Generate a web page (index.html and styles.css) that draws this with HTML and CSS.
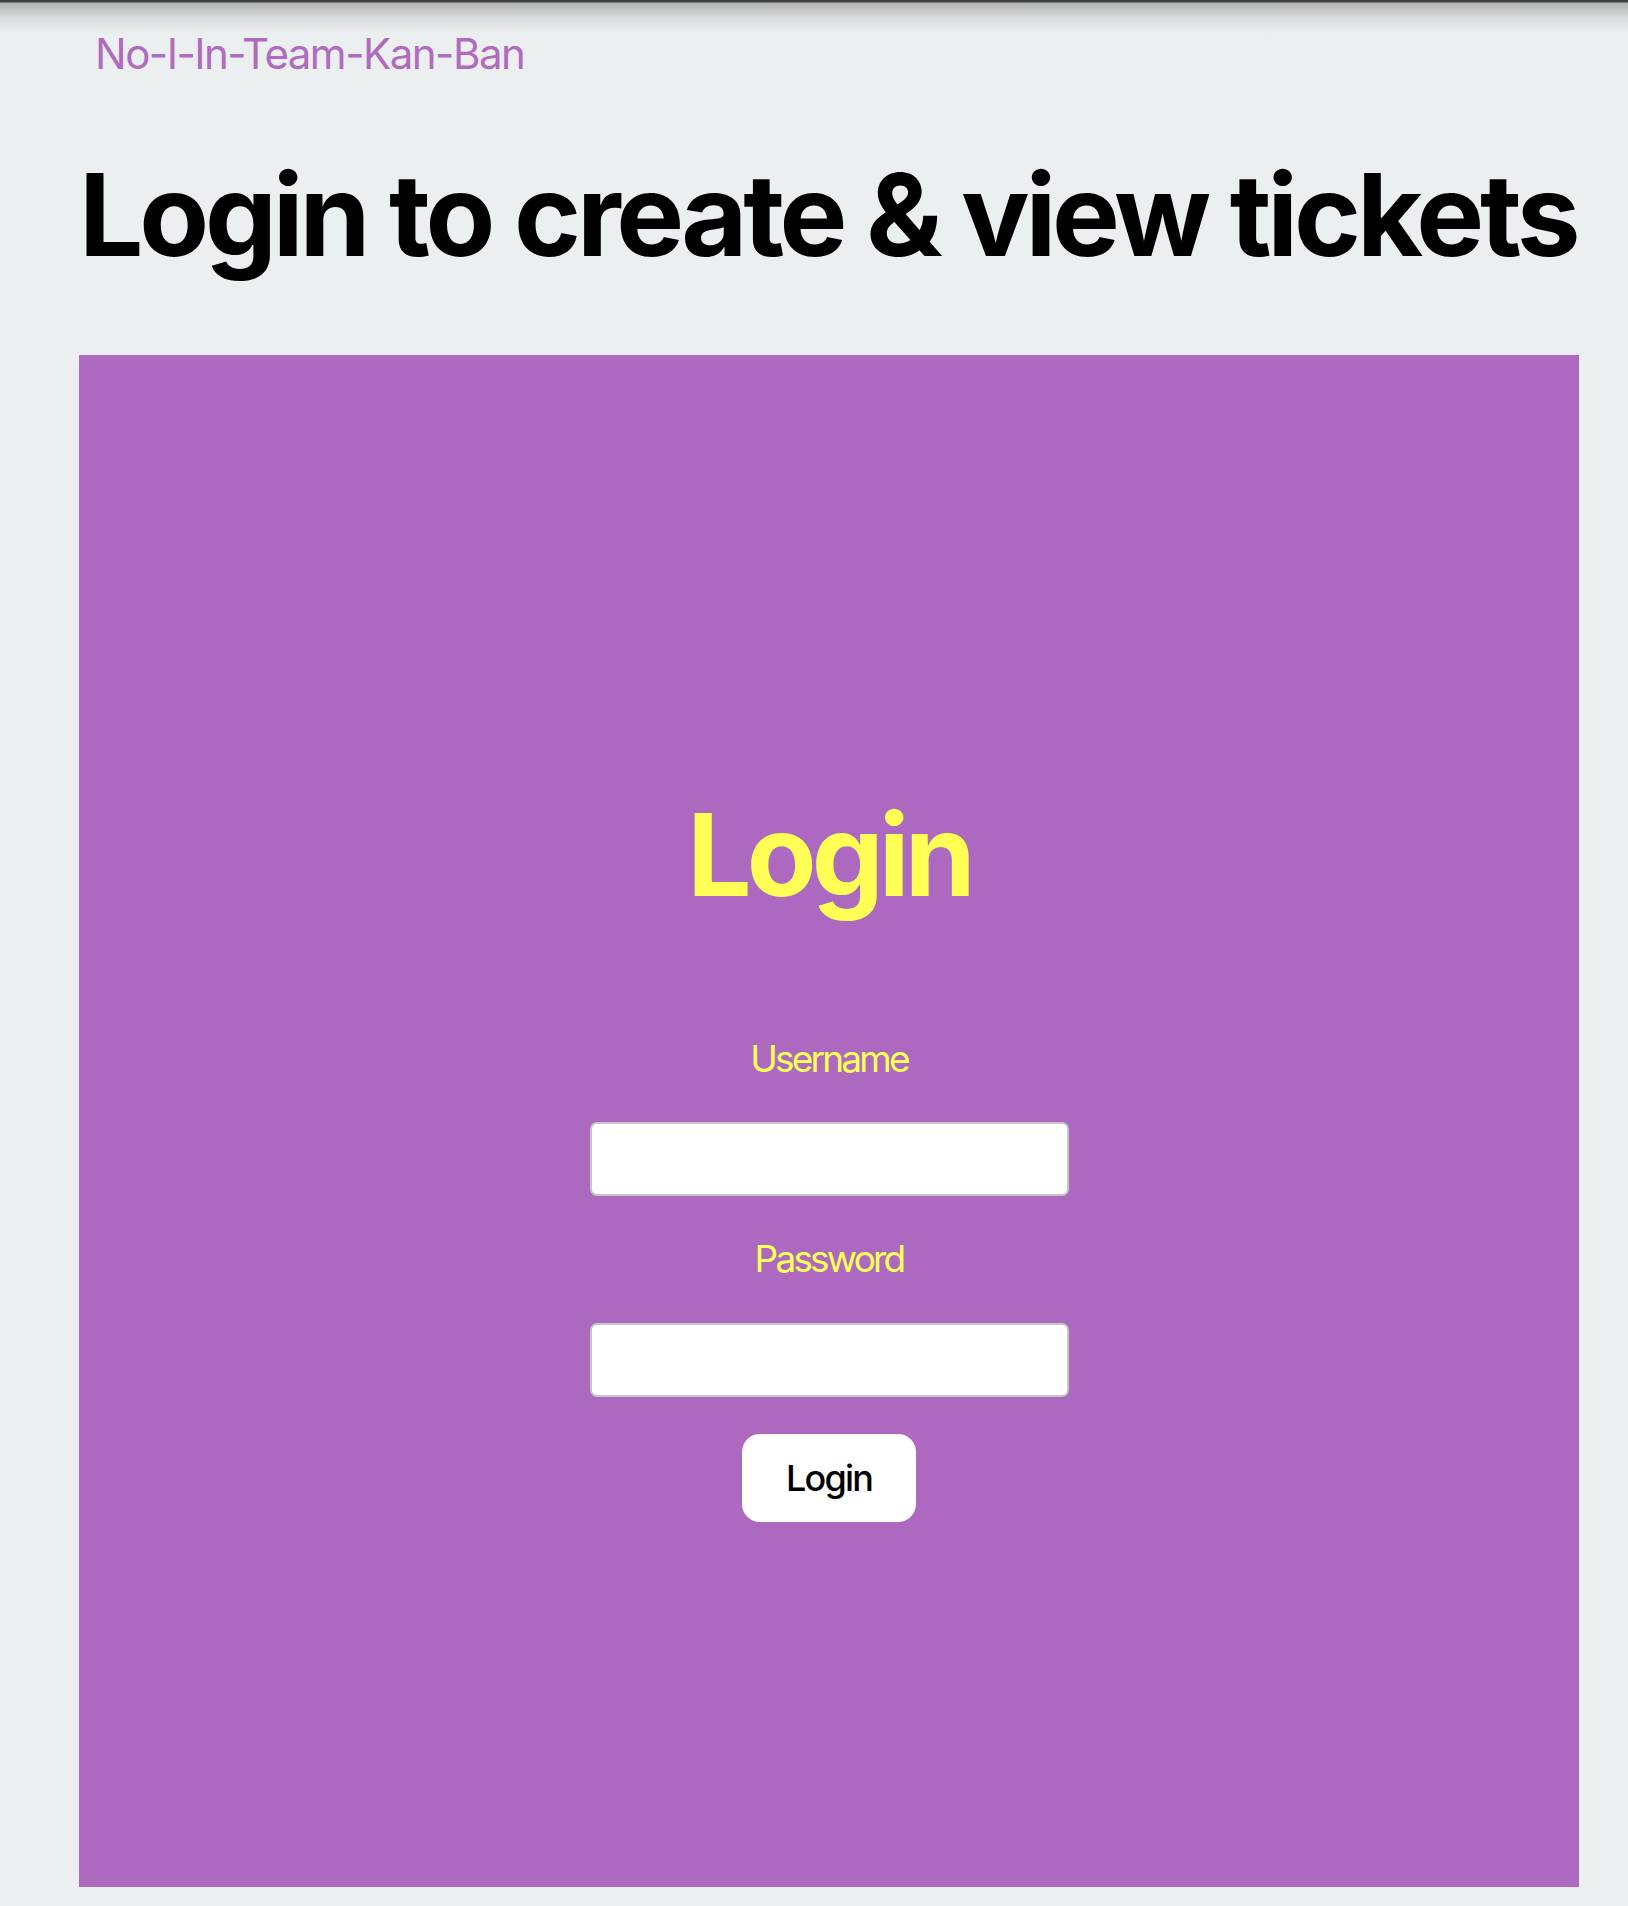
FILE: index.html
```html
<!DOCTYPE html>
<html lang="en">
<head>
<meta charset="utf-8">
<title>No-I-In-Team-Kan-Ban</title>
<link rel="stylesheet" href="styles.css">
</head>
<body>
<header class="topbar">
  <a class="brand" href="#">No-I-In-Team-Kan-Ban</a>
</header>
<main class="page">
  <h1 class="page-title">Login to create &amp; view tickets</h1>
  <section class="login-panel">
    <form class="login-form">
      <h2 class="login-title">Login</h2>
      <label class="field-label" for="username">Username</label>
      <input class="field-input" id="username" type="text">
      <label class="field-label field-label--second" for="password">Password</label>
      <input class="field-input" id="password" type="password">
      <button class="login-button" type="button">Login</button>
    </form>
  </section>
</main>
</body>
</html>
```

FILE: styles.css
```css
html, body {
  margin: 0;
  padding: 0;
}

body {
  background: #eceff0;
  font-family: Inter, "Noto Sans", sans-serif;
  color: #000;
}

.topbar {
  padding: 28px 0 0 95px;
  background: linear-gradient(to bottom, #3e3e3e 0, #3e3e3e 2px, #b3b3b3 3px, #d9dbdc 18px, #eceff0 34px) no-repeat;
  background-size: 100% 34px;
}

.brand {
  font-size: 42px;
  line-height: 51px;
  letter-spacing: -1.5px;
  color: #b06bc0;
  text-decoration: none;
  display: inline-block;
}

.page {
  padding: 0 49px 0 79px;
}

.page-title {
  margin: 67px 0 71px;
  width: 1494px;
  font-size: 114px;
  line-height: 138px;
  font-weight: 700;
  letter-spacing: -4.2px;
  text-align: center;
  white-space: nowrap;
}

.login-panel {
  width: 1500px;
  height: 1532px;
  box-sizing: border-box;
  background: #ad69bf;
  padding-top: 431px;
}

.login-form {
  display: flex;
  flex-direction: column;
  align-items: center;
}

.login-title {
  margin: 0 0 112px;
  font-size: 114px;
  line-height: 138px;
  font-weight: 700;
  letter-spacing: -5px;
  color: #ffff55;
}

.field-label {
  font-size: 37px;
  line-height: 45px;
  letter-spacing: -2.8px;
  color: #ffff55;
  margin-bottom: 41px;
}

.field-label--second {
  margin-top: 40px;
  margin-bottom: 42px;
}

.field-input {
  width: 479px;
  height: 74px;
  box-sizing: border-box;
  border: 2px solid #c6c6c6;
  border-radius: 7px;
  background: #fff;
  margin: 0;
  padding: 0 12px;
  font-size: 30px;
  font-family: inherit;
}

.login-button {
  margin-top: 37px;
  width: 174px;
  height: 88px;
  border: none;
  border-radius: 18px;
  background: #fff;
  color: #000;
  font-family: Inter, "Noto Sans", sans-serif;
  font-size: 36px;
  font-weight: 500;
  letter-spacing: -1.8px;
  padding: 0;
}
```
